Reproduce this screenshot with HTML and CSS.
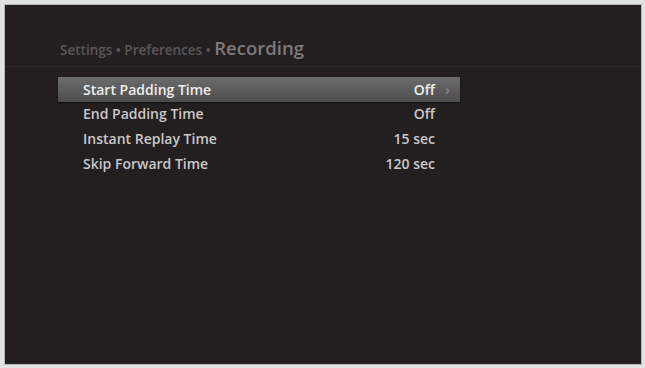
FILE: index.html
```html
<!DOCTYPE html>
<html>
<head>
<meta charset="utf-8">
<link rel="stylesheet" href="styles.css">
</head>
<body>
<div class="frame">
  <div class="screen">
    <div class="header"><span class="crumb">Settings • Preferences •&nbsp;</span><span class="title">Recording</span></div>
    <div class="list">
      <div class="row selected"><span class="label">Start Padding Time</span><span class="value">Off</span><span class="chev">›</span></div>
      <div class="row"><span class="label">End Padding Time</span><span class="value">Off</span><span class="chev"></span></div>
      <div class="row"><span class="label">Instant Replay Time</span><span class="value">15 sec</span><span class="chev"></span></div>
      <div class="row"><span class="label">Skip Forward Time</span><span class="value">120 sec</span><span class="chev"></span></div>
    </div>
  </div>
</div>
</body>
</html>
```
FILE: styles.css
```css
html, body { margin: 0; padding: 0; background: #dedede; }
.frame {
  width: 645px; height: 368px; box-sizing: border-box;
  padding: 5px 4px 4px 5px; background: #e2e2e2;
}
.screen {
  width: 100%; height: 100%; background: #231f20;
  outline: 1px solid #b8b8b8;
  font-family: "Open Sans", "DejaVu Sans", sans-serif;
}
.header {
  height: 62px; box-sizing: border-box;
  padding: 31px 0 0 55px;
  border-bottom: 1px solid #2f2b2c;
  line-height: 24px;
}
.crumb { font-size: 13.5px; color: #5a5858; font-weight: 600; }
.title { font-size: 18.5px; color: #7c7a7a; font-weight: 600; }
.list { margin: 10px 0 0 53px; width: 402px; }
.row {
  display: flex; align-items: center; height: 24.6px;
  padding-left: 25px; font-size: 14px; font-weight: 600; color: #cac8c8;
}
.row.selected {
  background: linear-gradient(#6d6c6c, #4d4c4c);
  color: #eeeeee; border-radius: 1px;
  box-shadow: 0 1px 2px rgba(0,0,0,0.5);
}
.label { flex: 1; }
.value { text-align: right; }
.chev { width: 25px; text-align: center; color: #858585; font-size: 15px; }
```
